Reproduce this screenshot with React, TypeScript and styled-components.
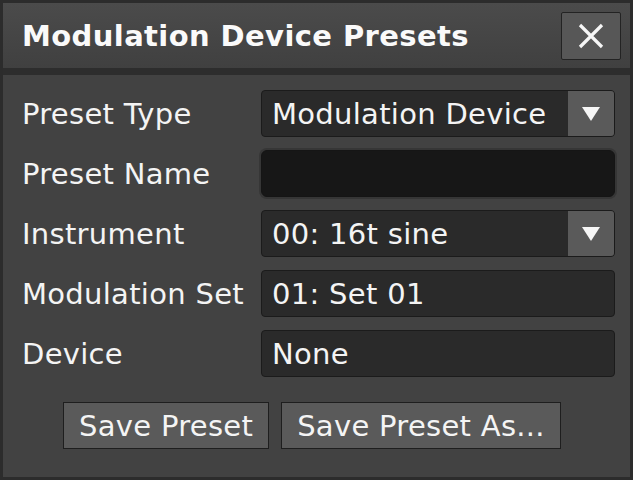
import React from "react";
import styled, { createGlobalStyle } from "styled-components";

const GlobalStyle = createGlobalStyle`
  html, body {
    margin: 0;
    padding: 0;
    background: #2c2c2c;
  }
  body {
    font-family: "DejaVu Sans", "Liberation Sans", sans-serif;
    color: #f2f2f2;
  }
`;

const Window = styled.div`
  margin: 3px;
  height: 474px;
  display: flex;
  flex-direction: column;
  background: #424242;
`;

const TitleBar = styled.div`
  height: 65px;
  flex-shrink: 0;
  display: flex;
  align-items: center;
  justify-content: space-between;
  padding: 0 9px 0 19px;
  background: linear-gradient(#4b4b4b, #404040);
  border-bottom: 7px solid #2d2d2d;
`;

const Title = styled.h1`
  margin: 0;
  font-size: 29px;
  font-weight: bold;
  letter-spacing: 0.4px;
  color: #fafafa;
`;

const CloseButton = styled.button`
  width: 60px;
  height: 48px;
  padding: 0;
  display: flex;
  align-items: center;
  justify-content: center;
  background: #575757;
  border: 1px solid #232323;
  border-radius: 2px;
`;

const Body = styled.div`
  flex: 1;
  padding: 15px 15px 0 19px;
  display: flex;
  flex-direction: column;
`;

const Form = styled.div`
  display: grid;
  grid-template-columns: 239px 1fr;
  grid-auto-rows: 47px;
  row-gap: 13px;
  align-items: center;
`;

const Label = styled.span`
  font-size: 29px;
  letter-spacing: 0.3px;
  color: #f4f4f4;
  white-space: nowrap;
`;

const Field = styled.div<{ $dark?: boolean }>`
  height: 47px;
  box-sizing: border-box;
  display: flex;
  align-items: stretch;
  background: ${(p) => (p.$dark ? "#171717" : "#2a2a2a")};
  border: 1px solid ${(p) => (p.$dark ? "#151515" : "#1b1b1b")};
  border-radius: ${(p) => (p.$dark ? "6px" : "4px")};
  box-shadow: ${(p) => (p.$dark ? "0 0 0 2px #363636" : "none")};
  overflow: hidden;
`;

const FieldText = styled.span`
  flex: 1;
  display: flex;
  align-items: center;
  padding-left: 10px;
  font-size: 29px;
  letter-spacing: 0.3px;
  color: #f4f4f4;
  white-space: nowrap;
`;

const ArrowBox = styled.span`
  width: 46px;
  display: flex;
  align-items: center;
  justify-content: center;
  background: #5a5a5a;
`;

const ButtonRow = styled.div`
  display: flex;
  gap: 12px;
  margin-top: 25px;
  padding-left: 41px;
`;

const Button = styled.button`
  height: 47px;
  padding: 0 15px;
  background: #5a5a5a;
  border: 1px solid #1e1e1e;
  border-radius: 0;
  font-family: "DejaVu Sans", "Liberation Sans", sans-serif;
  font-size: 29px;
  letter-spacing: 0.3px;
  color: #f4f4f4;
  white-space: nowrap;
`;

const Arrow = () => (
  <svg width="18" height="14" viewBox="0 0 18 14">
    <polygon points="0,0 18,0 9,14" fill="#f6f6f6" />
  </svg>
);

const CloseIcon = () => (
  <svg width="26" height="26" viewBox="0 0 26 26">
    <path d="M2 2 L24 24 M24 2 L2 24" stroke="#f6f6f6" strokeWidth="3.2" />
  </svg>
);

type Row = { label: string; value?: string; select?: boolean; input?: boolean };

const rows: Row[] = [
  { label: "Preset Type", value: "Modulation Device", select: true },
  { label: "Preset Name", input: true },
  { label: "Instrument", value: "00: 16t sine", select: true },
  { label: "Modulation Set", value: "01: Set 01" },
  { label: "Device", value: "None" },
];

export default function App() {
  return (
    <>
      <GlobalStyle />
      <Window>
        <TitleBar>
          <Title>Modulation Device Presets</Title>
          <CloseButton>
            <CloseIcon />
          </CloseButton>
        </TitleBar>
        <Body>
          <Form>
            {rows.map((r) => (
              <React.Fragment key={r.label}>
                <Label>{r.label}</Label>
                <Field $dark={r.input}>
                  <FieldText>{r.value}</FieldText>
                  {r.select ? (
                    <ArrowBox>
                      <Arrow />
                    </ArrowBox>
                  ) : null}
                </Field>
              </React.Fragment>
            ))}
          </Form>
          <ButtonRow>
            <Button>Save Preset</Button>
            <Button>Save Preset As...</Button>
          </ButtonRow>
        </Body>
      </Window>
    </>
  );
}
